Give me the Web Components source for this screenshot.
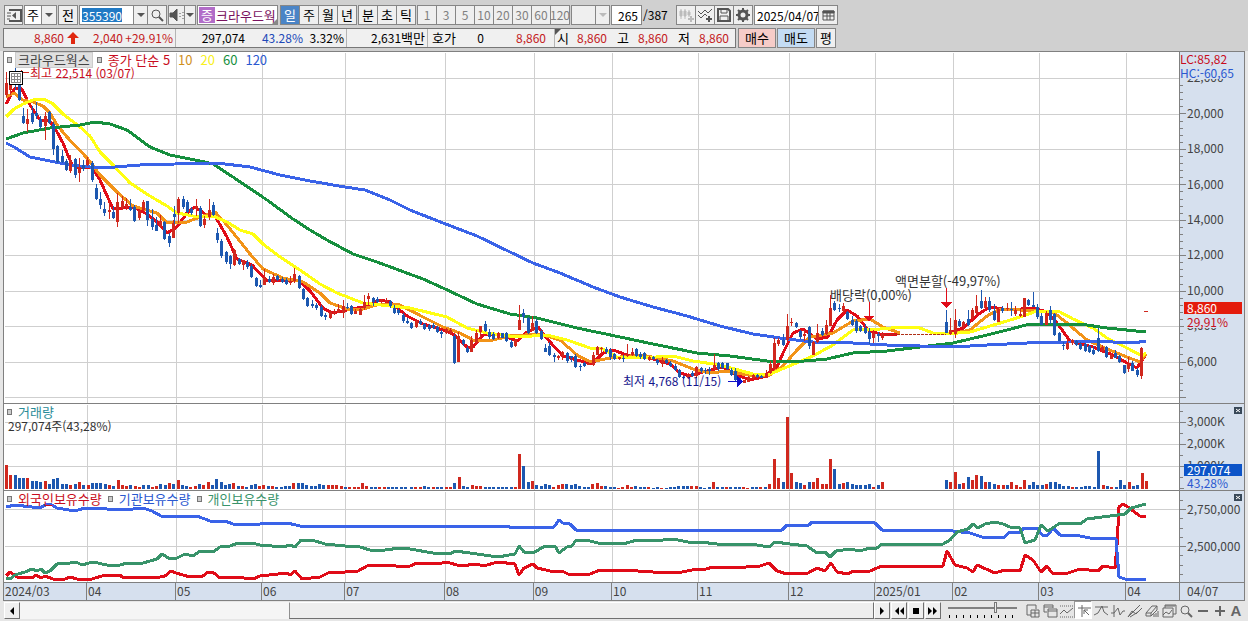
<!DOCTYPE html>
<html lang="ko">
<head>
<meta charset="utf-8">
<meta name="viewport" content="width=device-width, initial-scale=1">
<title>크라우드웍스 355390</title>
<style>
body {
    margin: 0;
    background: #e6e6e6;
    color: #000;
    font: 13px/14px "Noto Sans CJK KR", sans-serif;
}
</style>
</head>
<body>
<stock-app></stock-app>

<script>
// Every pane is drawn on one shared coordinate sheet; a pane shows its own window of it.
const SHEET = {
    price: { view: [4, 52, 1175, 351], grid: [78, 114, 149, 184, 220, 255, 291, 326, 362, 397] },
    volume: { view: [4, 404, 1175, 86], grid: [422, 444, 466] },
    holding: { view: [4, 491, 1175, 91], grid: [509, 546] }
};
const MONTH_LINES = [87, 176, 262, 345, 445, 534, 612, 698, 789, 875, 953, 1039, 1126];

// Runs of candles: first x, last x, then "colour high bodyTop bodyBottom low".
const CANDLES = [
    [6, 173, `r 72 83 95 97,r 78 82 90 95,b 68 75 84 90,b 72 78 100 101,b 108 116 123 124,r 109 119 124 132,b 106 113 122 124,b 102 113 116 119,b 116 119 127 129,r 112 116 126 140,b 111 112 123 124,b 122 124 149 155,b 145 146 162 163,b 150 156 162 163,b 159 161 170 171,r 155 161 171 173,b 158 159 175 178,r 158 167 173 182,b 160 165 169 171,r 157 160 165 166,b 161 163 180 182,b 184 188 199 200,b 192 199 205 209,b 202 209 213 216,r 201 210 212 219,b 206 212 218 219,r 193 202 222 227,r 196 201 208 210,r 198 204 207 210,b 199 207 210 211,b 205 207 221 222,r 209 210 218 220,r 200 202 210 211,b 201 201 220 226,b 209 219 227 230,b 217 225 231 231,r 215 221 227 228,b 221 222 239 240,b 233 236 243 247,r 220 223 238 238`],
    [174, 213, `b 206 214 217 224,r 197 199 213 223,b 196 199 207 209,b 200 202 212 213,b 207 209 213 215,r 199 206 209 216,b 206 208 226 227,r 216 219 225 228,r 199 210 217 220,b 202 205 215 216`],
    [217, 316, `b 228 233 240 243,b 239 241 256 258,b 251 252 262 264,b 255 256 264 269,r 249 250 265 266,b 258 259 264 265,r 260 260 265 270,b 260 262 267 269,b 264 266 277 278,b 277 278 286 287,b 280 285 287 288,r 269 278 285 285,b 276 279 282 283,r 274 277 283 285,b 275 276 280 281,b 277 279 282 283,b 278 280 284 285,r 276 281 283 285,r 268 274 281 283,b 275 276 288 289,b 288 289 299 300,b 297 298 306 307,b 300 304 306 308,b 303 305 308 310`],
    [321, 450, `b 305 307 316 317,b 313 315 317 320,r 310 312 318 319,r 309 312 313 315,r 304 309 312 313,r 300 306 313 318,b 303 307 308 309,b 305 306 314 315,r 309 311 314 314,r 307 309 315 315,r 295 302 308 310,r 293 296 299 305,b 297 298 302 306,b 297 299 302 303,r 299 300 301 303,r 298 300 302 303,b 300 301 306 308,b 305 308 313 314,b 308 310 313 315,b 313 315 321 323,b 318 321 323 324,b 322 323 328 329,r 319 321 327 328,b 319 321 324 325,b 323 324 329 330,b 324 325 329 331,b 323 325 328 329,b 326 327 332 333,b 330 332 334 338,r 328 329 333 334,r 328 330 334 335`],
    [454, 515, `b 334 336 363 364,r 332 336 362 362,b 339 340 344 346,b 346 348 352 353,r 336 340 352 352,r 330 333 343 343,r 326 326 332 338,b 321 324 331 332,b 329 332 337 339,b 332 334 339 340,r 332 333 338 339,b 333 333 338 338,b 332 333 341 342,b 340 342 347 348,r 339 340 346 347`],
    [519, 636, `r 305 320 330 330,b 309 313 317 323,b 317 318 333 334,r 316 323 331 331,b 319 321 333 334,b 329 331 339 340,b 344 348 352 352,b 342 346 355 356,b 353 355 357 362,r 355 356 358 360,r 351 352 356 360,b 352 353 361 363,b 356 356 358 362,b 354 356 367 368,b 364 366 367 371,b 362 363 366 367,r 362 363 365 365,r 352 355 365 366,r 346 347 355 355,r 347 348 349 354,b 347 349 352 354,b 348 350 357 360,b 353 354 359 360,r 357 357 359 360,b 355 358 359 362,r 344 354 356 357,r 348 352 355 356,b 348 349 356 357`],
    [640, 770, `b 352 354 357 359,b 352 353 359 360,r 356 357 360 361,b 356 357 359 360,b 359 360 363 365,r 357 360 364 367,b 359 360 363 364,b 361 363 366 367,b 364 366 370 371,b 369 370 377 378,b 376 377 378 379,r 373 375 378 379,b 371 373 376 377,r 366 367 376 378,b 367 368 371 373,b 368 370 371 374,b 367 369 371 375,r 354 365 369 370,b 362 363 369 371,b 362 363 368 369,b 363 363 369 370,b 368 370 375 376,b 368 371 380 381,b 378 380 383 384,r 380 380 383 383,r 376 377 382 382,r 374 375 378 379,b 374 375 377 378,b 375 376 378 378,r 370 373 378 378,r 361 364 373 374`],
    [774, 882, `r 338 343 369 370,r 338 340 344 346,b 334 340 345 346,r 314 326 340 341,r 318 322 323 326,b 322 323 327 328,b 330 331 337 339,r 330 334 336 341,b 326 327 346 349,r 341 342 355 355,r 324 333 342 343,b 328 331 335 336,r 320 325 334 335,r 295 308 326 326,b 301 303 310 311,b 304 308 309 312,r 303 306 311 313,b 311 312 319 320,b 316 320 325 326,b 319 321 331 333,b 325 326 331 332,b 324 328 333 334,b 328 332 339 344,r 330 333 338 343,b 332 334 336 342,r 332 334 338 340`],
    [946, 1141, `b 310 322 333 333,r 318 330 334 335,r 309 320 334 338,b 319 321 326 327,r 321 322 326 330,b 310 319 325 326,r 308 310 318 320,r 295 306 313 315,b 290 301 308 309,r 297 301 308 308,b 297 301 310 312,b 304 311 320 321,r 307 309 322 322,b 306 308 311 313,r 303 308 309 311,b 302 309 310 316,r 306 310 314 316,r 308 314 316 317,r 298 298 317 317,b 299 300 305 306,b 292 305 307 307,b 304 307 317 319,b 313 316 325 325,r 311 313 325 325,b 306 310 320 324,b 313 314 335 336,b 332 333 341 341,b 342 345 346 350,r 340 343 349 350,r 339 340 343 345,b 340 341 345 346,b 342 344 349 350,b 343 344 351 352,b 345 346 352 353,b 346 350 354 355,b 328 338 351 352,r 345 347 351 353,b 346 347 357 358,r 353 355 359 359,b 350 353 358 358,b 355 356 362 363,b 365 365 373 374,r 357 364 369 372,b 361 363 371 371,b 368 370 375 377,r 347 348 376 379`]
];

const AVERAGES = [
    ["#e00c18", "6,104 15,88 22,89 28,102 40,120 50,121 57,132 63,143 72,165 80,168 92,167 100,180 113,209 133,207 147,214 157,222 167,233 177,227 187,213 195,207 205,214 215,216 227,237 237,259 252,265 267,281 283,280 300,281 310,291 323,308 332,313 347,310 363,307 380,300 390,302 407,316 423,324 443,330 453,334 467,347 473,347 483,335 500,334 517,341 527,332 538,327 550,342 563,356 577,360 592,364 603,353 613,350 627,355 637,355 653,359 670,364 680,373 690,376 703,372 723,367 737,375 750,380 763,377 777,367 783,353 793,333 803,329 817,339 828,337 837,320 847,310 857,316 868,330 883,335 897,334"],
    ["#e00c18", "950,333 963,328 980,313 990,307 1010,310 1033,308 1047,312 1057,323 1070,341 1093,347 1113,355 1127,363 1137,368 1146,354"],
    ["#f29318", "6,97 14,93 23,100 33,102 43,106 50,113 57,125 67,137 87,158 100,175 117,192 133,206 157,213 167,223 187,222 200,217 215,212 227,225 250,254 263,269 283,278 303,282 320,293 330,303 347,309 363,309 380,304 400,305 423,317 443,327 460,333 473,340 493,340 510,336 540,334 560,340 577,355 590,362 610,358 640,355 647,356 673,361 693,369 710,373 727,371 753,376 770,375 783,366 797,350 810,337 833,333 853,321 870,319 883,327 900,333"],
    ["#f29318", "950,334 970,330 987,316 1000,309 1020,310 1053,312 1067,323 1087,340 1107,349 1127,357 1140,362 1146,354"],
    ["#ffff12", "6,117 14,109 23,104 33,100 43,99 52,103 63,114 80,127 90,136 100,152 115,167 130,183 150,196 167,206 177,213 193,216 213,216 227,222 240,230 253,234 263,244 280,257 300,270 320,284 337,293 363,303 390,306 410,308 447,317 467,328 487,333 517,337 547,335 567,340 590,348 603,349 617,357 640,358 673,356 693,361 720,365 753,374 770,374 787,367 813,356 833,345 853,330 880,329 903,327 917,327 933,333 947,334 970,332 997,324 1020,317 1037,311 1060,312 1073,319 1093,328 1107,338 1127,348 1142,356 1146,353"],
    ["#168f3e", "6,139 23,133 50,128 80,125 95,122 110,124 127,130 150,147 170,155 200,161 213,164 233,177 267,200 293,219 310,230 327,240 353,254 377,262 423,279 443,288 477,304 510,314 537,318 577,328 620,337 653,344 697,353 730,356 767,361 793,362 827,359 853,353 887,351 920,347 953,343 987,335 1007,330 1030,324 1053,324 1080,324 1107,328 1146,332"],
    ["#3a63e8", "6,143 14,147 30,157 50,161 70,165 90,167 115,167 140,165 175,164 210,163 225,164 250,167 280,175 310,181 345,187 365,190 390,200 410,210 443,223 477,236 510,252 533,263 560,273 593,287 620,297 653,307 687,316 720,326 753,334 787,339 813,342 853,343 887,345 920,346 953,347 987,345 1027,343 1070,342 1093,341 1133,343 1146,341"]
];

// Runs of volume bars: first x, last x, then colour and height of each bar.
const VOLUMES = [
    [6, 405, "r24 r14 b14 b11 b11 r11 b8 b8 b7 r8 b5 b10 b11 b5 b5 r4 b5 r7 b4 r4 b6 b6 b6 b5 r4 b3 r9 r4 r3 b4 r3 r2 b4 b4 r2 r3 b5 b4 r6 b5 r9 b4 b3 r2 r3 b5 r4 r7 b4 b10 b7 b4 b5 r6 b3 r3 b2 b4 b5 r3 r4 b3 r3 b2 b2 b3 b3 r6 b6 b6 b4 b3 b3 b5 b4 r4 r4 r4 r3 b2 r2 r2 r2 r6 r3 b2 b2 r2 r2 b2 b2 b2 b2 b2"],
    [411, 515, "b2 r2 r2 b3 b2 r2 b2 b2 r2 r2 b6 r12 b3 b2 r4 r3 r3 b2 b2 b2 b2 b2 b2 b2 r2"],
    [519, 769, "r35 b23 b7 r8 b4 b3 b5 b4 r2 r4 r5 b5 b4 b5 b3 b2 b2 r5 r6 r3 b3 b2 b2 r1 r2 r4 r2 b3 b2 b2 r2 b1 b2 r1 b1 b2 b2 b3 b3 b3 r3 r3 b2 b1 b2 r7 b2 b2 r2 b2 b2 b2 r2 r1 b2 b2 r2 b2 r5"],
    [774, 882, "r30 r11 b7 r72 r16 b7 b6 r4 b7 r7 r11 r5 r5 r30 b20 b5 r6 b7 b5 b4 b4 b4 b5 r2 b4 r7"],
    [946, 1146, "b9 r7 r17 b5 r6 b12 r9 r14 b13 r7 b7 b5 r4 r4 b4 r7 r4 r2 r9 b4 b7 b4 b4 r5 b7 b7 b5 b3 b3 r2 b2 b2 b3 b3 b2 b38 r4 b3 r2 b2 b9 b4 r7 b3 b4 r16 r8"]
];

const HOLDINGS = [
    ["#e00c18", "6,576 10,572 17,577 32,578 36,575 41,578 45,576 53,579 65,579 70,577 77,579 92,579 105,575 120,575 122,577 145,577 155,578 165,576 171,571 176,573 190,577 203,576 208,572 214,573 220,578 235,577 253,579 260,576 287,573 290,575 295,571 302,579 320,577 328,573 345,572 358,571 367,566 390,565 402,567 410,566 417,563 442,563 447,562 460,566 477,564 483,566 498,562 515,564 519,575 524,568 533,564 537,568 550,571 562,571 568,574 590,574 600,570 623,570 653,572 677,573 697,569 703,570 713,567 733,568 760,566 769,563 777,571 787,574 808,573 817,568 825,571 831,563 837,572 848,574 853,571 870,571 882,566 943,566 947,551 955,565 967,568 973,572 977,565 995,573 1005,570 1020,571 1025,555 1033,560 1041,572 1047,566 1052,573 1068,573 1080,569 1098,571 1103,566 1115,568 1117,545 1119,507 1123,504 1128,507 1140,516 1146,516"],
    ["#3a63e8", "6,507 15,505 40,508 47,504 52,505 57,508 75,511 85,508 100,508 107,509 133,509 143,508 152,511 161,516 197,516 210,521 225,521 233,524 260,524 264,523 287,523 300,526 508,526 509,527 554,527 559,520 563,523 570,524 576,530 782,530 787,525 809,525 812,522 862,522 875,523 882,530 940,530 953,531 970,533 982,537 1003,538 1010,532 1020,532 1024,528 1037,528 1042,535 1048,535 1053,528 1060,535 1080,536 1090,538 1116,539 1119,577 1125,579 1146,579"],
    ["#38936a", "6,578 10,579 15,575 25,572 32,569 37,571 41,569 45,573 50,571 57,564 70,563 76,562 82,565 93,562 107,565 120,565 127,563 143,563 157,559 162,554 170,559 177,558 185,554 193,556 200,551 213,552 220,547 230,546 238,543 252,543 260,545 283,547 290,545 295,547 301,540 312,540 325,544 345,546 360,547 370,550 385,550 400,548 410,549 433,553 450,554 455,551 477,554 498,557 515,554 519,546 524,552 533,553 545,546 555,546 559,553 567,547 572,546 576,540 590,541 598,543 623,544 637,540 653,541 673,539 693,543 700,542 717,544 733,544 757,545 769,547 775,542 790,544 807,546 817,553 825,552 830,557 836,551 850,549 860,551 870,548 877,548 882,544 943,544 950,540 957,532 968,529 973,524 978,528 985,524 995,522 1003,524 1010,527 1020,528 1025,543 1035,540 1041,525 1048,531 1060,523 1080,524 1087,519 1110,516 1125,514 1131,508 1146,504"]
];

const RED = "#d0281e";
const BLUE = "#1d58b0";
const paint = c => c === "r" ? RED : BLUE;

const ICONS = {
    panel: `<path d="M3 3h12v11H3" stroke-width="2"/><path d="M10 5v7L6 8.500z" fill="currentColor" stroke="none"/><path d="M1 6h4M1 9h4M1 12h3"/>`,
    search: `<circle cx="7" cy="7" r="4"/><path d="M10 10l4 4" stroke-width="2"/>`,
    speaker: `<path d="M1 6h3l4-4v12l-4-4H1z" fill="currentColor"/><path d="M11 6v1M11 9v1M14 5v1M14 8v1M14 11v1"/>`,
    down: `<path d="M4 6h8l-4 4z" fill="currentColor" stroke="none"/>`,
    candles: `<path d="M3 2v10M7 2v10M11 3v7"/><path d="M2 4h2v5H2zM6 4h2v5H6zM10 5h2v3h-2z" fill="currentColor"/><path d="M13 9v6M10 12h6" stroke-width="2"/>`,
    addline: `<path d="M1 4l3 3 4-4 3 3 4-4M1 8l3 3 4-4 2 2"/><path d="M12 9v6M9 12h6" stroke-width="2"/>`,
    save: `<path d="M2 2h10l2 2v10H2z" stroke-width="2"/><path d="M5 2v4h6V2M4 14V9h8v5"/>`,
    gear: `<circle cx="8" cy="8" r="4" stroke-width="3"/><path d="M8 1v3M8 12v3M1 8h3M12 8h3M3 3l2 2M11 11l2 2M13 3l-2 2M5 11l-2 2" stroke-width="2"/>`,
    calendar: `<path d="M3 4h11v9H3zM3 9h11M7 6v7M10 6v7"/><path d="M3 4h11v2H3z" fill="currentColor"/>`,
    left: `<path d="M10 4v8L6 8z" fill="currentColor" stroke="none"/>`,
    right: `<path d="M6 4v8l4-4z" fill="currentColor" stroke="none"/>`,
    rewind: `<path d="M8 4v8L4 8zM13 4v8L9 8z" fill="currentColor" stroke="none"/>`,
    forward: `<path d="M3 4v8l4-4zM8 4v8l4-4z" fill="currentColor" stroke="none"/>`,
    stop: `<path d="M5 5h6v6H5z" fill="currentColor" stroke="none"/>`,
    newpane: `<path d="M6 12H2V2h9v4"/><path d="M6 7h8v7H6zM6 10h8M10 7v7"/>`,
    windows: `<path d="M5 9H2V2h9v3M2 4h9M6 6h9v8H6zM6 8h9"/>`,
    dots: `<path d="M1 3h14M1 14h14" stroke-dasharray="1 1"/><path d="M1 11l4-4 3 3 6-5"/>`,
    cross: `<path d="M6 2v12M2 5h13"/><path d="M13 12L8 7M8 11V7h4"/>`,
    peak: `<path d="M2 4h13M1 12l4-2 4-7 2 6 4 3"/>`,
    spike: `<path d="M4 2v12M1 10h3l4-5 2 7 3-4h2"/>`,
    slopes: `<path d="M1 14L13 2M1 14l4-6 4 3 6-6M3 14l8-5"/>`,
    eraser: `<path d="M2 10l6-7h5l-6 7zM2 10v3h5v-3M7 13l6-6V3"/><path d="M10 14v-3M12 14v-4M14 14v-6"/>`,
    images: `<path d="M4 5V2h11v9h-3M2 5h10v9H2zM2 12l3-3 3 2 3-4M4 3h10"/>`,
    minus: `<path d="M3 8h10" stroke-width="2"/>`,
    plus: `<path d="M3 8h10M8 3v10" stroke-width="2"/>`
};

class ToolIcon extends HTMLElement {
    constructor() {
        super();
        this.attachShadow({ mode: "open" });
    }
    connectedCallback() {
        this.shadowRoot.innerHTML = `
            <style>
            :host { display: inline-block; width: 16px; height: 16px; flex: none; }
            svg { display: block; width: 16px; height: 16px; }
            </style>
            <svg viewBox="0 0 16 16" fill="none" stroke="currentColor" aria-hidden="true">${ICONS[this.getAttribute("name")] || ""}</svg>
        `;
    }
}
customElements.define("tool-icon", ToolIcon);

class ToolButton extends HTMLElement {
    constructor() {
        super();
        this.attachShadow({ mode: "open" });
        this.shadowRoot.innerHTML = `
            <style>
            :host { display: flex; width: var(--w, 20px); height: 20px; flex: none; margin-right: -1px; }
            button {
                box-sizing: border-box;
                display: flex;
                align-items: center;
                justify-content: center;
                width: 100%;
                margin: 0;
                padding: 0;
                overflow: hidden;
                border: 1px solid #868686;
                background: var(--bg, #efefef);
                color: inherit;
                font: inherit;
            }
            :host([flat]) { margin: 0; height: 17px; }
            :host([flat]) button { border: 0; background: none; }
            :host([raised]) { margin: 0; height: 17px; }
            :host([raised]) button { border-color: #fff #707070 #707070 #fff; }
            :host([active]) button { background: #4a84c6; color: #fff; }
            :host([dim]) button { color: #808080; font-size: 12px; }
            </style>
            <button type="button"><slot></slot></button>
        `;
    }
    connectedCallback() {
        const label = this.getAttribute("label");
        if (label) this.shadowRoot.querySelector("button").setAttribute("aria-label", label);
    }
}
customElements.define("tool-button", ToolButton);

class StockToolbar extends HTMLElement {
    constructor() {
        super();
        this.attachShadow({ mode: "open" });
        const group = (names, attrs = "") => names.map(n => `<tool-button ${attrs}>${n}</tool-button>`).join("");
        this.shadowRoot.innerHTML = `
            <style>
            :host { display: flex; align-items: center; gap: 1px; height: 20px; padding-left: 4px; white-space: nowrap; overflow: hidden; }
            .group { display: flex; flex: none; padding-right: 1px; }
            input, select {
                box-sizing: border-box;
                height: 20px;
                margin: 0;
                padding: 0 3px;
                border: 1px solid #868686;
                border-radius: 0;
                background-color: #fff;
                color: inherit;
                font: inherit;
            }
            select { appearance: none; }
            .kind { width: 18px; margin-right: -1px; padding: 0 2px; }
            .code { width: 55px; margin-right: -1px; padding-left: 2px; font-size: 12px; color: #fff; background: linear-gradient(#2079c4, #2079c4) 2px 2px / 40px 14px no-repeat #fff; }
            .name { display: flex; align-items: center; width: 81px; height: 20px; box-sizing: border-box; border: 1px solid #868686; background: #fff; overflow: hidden; position: relative; margin-right: 1px; }
            .name b { width: 16px; margin: 0 1px; flex: none; text-align: center; line-height: 16px; color: #fff; background: #b26cc8; font-weight: normal; }
            .name input { flex: 1; min-width: 0; height: 18px; border: 0; padding: 0; color: #7a1260; }
            .name::after { content: ""; position: absolute; right: 0; bottom: 0; width: 5px; height: 5px; background: #888; clip-path: polygon(100% 0, 100% 100%, 0 100%); }
            .blank { width: 25px; margin-right: -1px; background: #efefef; }
            .count { width: 31px; padding: 0 3px; text-align: right; font-size: 12px; }
            .total { width: 32px; font-size: 12px; }
            .date { width: 65px; margin-right: -1px; padding: 0 0 0 2px; font-size: 12px; }
            .ghost { color: #bbb; }
            .dark { color: #555; }
            </style>
            <span class="group"><tool-button label="패널" style="--w:19px"><tool-icon class="dark" name="panel"></tool-icon></tool-button></span>
            <span class="group">
                <select class="kind" aria-label="종류"><option>주</option></select>
                <tool-button label="종류 열기" style="--w:16px"><tool-icon class="dark" name="down"></tool-icon></tool-button>
            </span>
            <span class="group"><tool-button>전</tool-button></span>
            <span class="group">
                <input class="code" aria-label="종목코드" value="355390">
                <tool-button label="종목 목록" style="--w:15px"><tool-icon class="dark" name="down"></tool-icon></tool-button>
                <tool-button label="검색"><tool-icon class="dark" name="search"></tool-icon></tool-button>
            </span>
            <span class="group">
                <tool-button label="음성" style="--w:17px"><tool-icon class="dark" name="speaker"></tool-icon></tool-button>
                <tool-button label="음성 메뉴" style="--w:12px"><tool-icon class="dark" name="down"></tool-icon></tool-button>
            </span>
            <span class="name"><b>증</b><input aria-label="종목명" value="크라우드웍" readonly></span>
            <span class="group"><tool-button active>일</tool-button>${group(["주", "월", "년"])}</span>
            <span class="group">${group(["분", "초", "틱"])}</span>
            <span class="group">${group(["1", "3", "5", "10", "20", "30", "60", "120"], "dim")}</span>
            <span class="group">
                <input class="blank" aria-label="사용자 주기">
                <tool-button label="주기 열기" style="--w:15px"><tool-icon class="ghost" name="down"></tool-icon></tool-button>
            </span>
            <input class="count" aria-label="표시 개수" value="265"><span class="total">/387</span>
            <span class="group">
                <tool-button label="봉 추가"><tool-icon class="ghost" name="candles"></tool-icon></tool-button>
                <tool-button label="지표 추가"><tool-icon class="dark" name="addline"></tool-icon></tool-button>
                <tool-button label="저장"><tool-icon class="dark" name="save"></tool-icon></tool-button>
                <tool-button label="설정"><tool-icon class="dark" name="gear"></tool-icon></tool-button>
            </span>
            <span class="group">
                <input class="date" aria-label="날짜" value="2025/04/07">
                <tool-button label="달력"><tool-icon class="dark" name="calendar"></tool-icon></tool-button>
            </span>
        `;
    }
}
customElements.define("stock-toolbar", StockToolbar);

class QuoteBar extends HTMLElement {
    constructor() {
        super();
        this.attachShadow({ mode: "open" });
        this.shadowRoot.innerHTML = `
            <style>
            :host { display: flex; gap: 2px; height: 20px; padding-left: 3px; white-space: nowrap; overflow: hidden; }
            .cells { display: flex; flex: none; box-sizing: border-box; border: 1px solid #777; background: #f0f0f0; font-size: 12px; line-height: 18px; }
            .cells > div { display: grid; box-sizing: border-box; border-right: 1px solid #b4b4b4; padding: 0 2px; text-align: right; }
            .cells > div:last-child { border: 0; }
            .price { grid-template-columns: 58px 16px 43px 50px; }
            .volume { grid-template-columns: 67px 58px 41px; }
            .amount { grid-template-columns: 76px; }
            .ask { grid-template-columns: 26px 28px 62px; width: 127px; }
            .ohl { grid-template-columns: 11px 39px 22px 39px 22px 39px; width: 180px; position: relative; }
            .ohl::before { content: ""; position: absolute; left: 0; top: 0; border: 3px solid; border-color: #555 transparent transparent #555; }
            b { font-size: 13px; font-weight: normal; }
            .up { color: #c4201c; }
            .down { color: #2048b8; }
            svg { width: 14px; height: 12px; align-self: center; margin-left: 2px; }
            </style>
            <div class="cells">
                <div class="price up"><span>8,860</span><svg viewBox="0 0 14 12" aria-hidden="true"><path d="M7 0l6 6H9v6H5V6H1z" fill="#e02810"/></svg><span>2,040</span><span>+29.91%</span></div>
                <div class="volume"><span>297,074</span><span class="down">43.28%</span><span>3.32%</span></div>
                <div class="amount"><span>2,631<b>백만</b></span></div>
                <div class="ask"><b>호가</b><span>0</span><span class="up">8,860</span></div>
                <div class="ohl"><b>시</b><span class="up">8,860</span><b>고</b><span class="up">8,860</span><b>저</b><span class="up">8,860</span></div>
            </div>
            <tool-button style="--w:38px;--bg:#f6ccc8">매수</tool-button>
            <tool-button style="--w:38px;--bg:#c4dcf4">매도</tool-button>
            <tool-button>평</tool-button>
        `;
    }
}
customElements.define("quote-bar", QuoteBar);

class ChartPlot extends HTMLElement {
    constructor() {
        super();
        this.attachShadow({ mode: "open" });
    }
    connectedCallback() {
        const kind = this.getAttribute("kind");
        const [x, y, w, h] = SHEET[kind].view;
        const grid = SHEET[kind].grid.map(g => `M${x} ${g}h${w}`).join("") + MONTH_LINES.map(m => `M${m} ${y}v${h}`).join("");
        const body = { price: this._price, volume: this._volume, holding: this._holding }[kind].call(this);
        this.shadowRoot.innerHTML = `
            <style>
            :host { display: block; position: relative; min-width: 0; min-height: 0; background: #fff; overflow: hidden; }
            .art { position: absolute; inset: 0; width: 100%; height: 100%; }
            .grid { stroke: #cfcfcf; vector-effect: non-scaling-stroke; }
            polyline { fill: none; stroke-width: 3; stroke-linejoin: round; vector-effect: non-scaling-stroke; }
            </style>
            <svg class="art" viewBox="${x} ${y} ${w} ${h}" preserveAspectRatio="none" shape-rendering="crispEdges" aria-hidden="true">
                <path class="grid" transform="translate(.5 .5)" d="${grid}"/>
                ${body}
            </svg>
            <slot></slot>
        `;
    }
    _spread(from, to, items, draw) {
        const step = items.length > 1 ? (to - from) / (items.length - 1) : 0;
        return items.map((item, i) => draw(Math.round(from + i * step), item)).join("");
    }
    _lines(series) {
        return series.map(([color, points]) => `<polyline stroke="${color}" points="${points}"/>`).join("");
    }
    _price() {
        const candles = CANDLES.map(([from, to, text]) => this._spread(from, to, text.split(","), (cx, item) => {
            const [c, high, top, bottom, low] = item.split(" ");
            return `<path fill="${paint(c)}" d="M${cx} ${high}h1V${low}h-1zM${cx - 1} ${top}h3V${Math.max(bottom, +top + 1)}h-3z"/>`;
        })).join("");
        return `
            ${this._lines(AVERAGES)}
            ${candles}
            <path d="M885 334.500h61" stroke="#b03018" stroke-dasharray="3 1"/>
            <path d="M1144 311.500h4" stroke="${RED}"/>
            <path d="M18 72.500h11M22 70l-3 3 3 3" stroke="${RED}" fill="none"/>
            <path d="M728 381.500h9" stroke="#1010c8"/><path d="M737 376l6 5-6 6z" fill="#1010c8"/>
            <path d="M869 302h1v14h4l-5 6-5-6h5zM946 288h1v14h5l-6 6-6-6h6z" fill="#e00c18"/>
        `;
    }
    _volume() {
        return VOLUMES.map(([from, to, text]) => this._spread(from, to, text.split(" "), (cx, item) =>
            `<rect x="${cx - 1}" y="${489 - item.slice(1)}" width="3" height="${item.slice(1)}" fill="${paint(item[0])}"/>`)).join("");
    }
    _holding() {
        return this._lines(HOLDINGS);
    }
}
customElements.define("chart-plot", ChartPlot);

// Text pinned to a point of a plot; x and y are sheet coordinates.
class ChartNote extends HTMLElement {
    constructor() {
        super();
        this.attachShadow({ mode: "open" });
        this.shadowRoot.innerHTML = `
            <style>:host { position: absolute; white-space: nowrap; transform: translateY(-50%); }</style>
            <slot></slot>
        `;
    }
    connectedCallback() {
        const [x, y, w, h] = SHEET[this.parentElement.getAttribute("kind")].view;
        this.style.left = (this.getAttribute("x") - x) / w * 100 + "%";
        this.style.top = (this.getAttribute("y") - y) / h * 100 + "%";
    }
}
customElements.define("chart-note", ChartNote);

class ChartLegend extends HTMLElement {
    constructor() {
        super();
        this.attachShadow({ mode: "open" });
        this.shadowRoot.innerHTML = `
            <style>
            :host { position: relative; display: flex; align-items: center; gap: 6px; padding: 1px 3px 0; line-height: 14px; white-space: nowrap; }
            ::slotted(i) { box-sizing: border-box; width: 5px; height: 6px; border: 1px solid #777; background: #ccc; }
            </style>
            <slot></slot>
        `;
    }
}
customElements.define("chart-legend", ChartLegend);

class ValueAxis extends HTMLElement {
    constructor() {
        super();
        this.attachShadow({ mode: "open" });
    }
    connectedCallback() {
        const kind = this.getAttribute("kind");
        const [, y, , h] = SHEET[kind].view;
        const grid = SHEET[kind].grid;
        const minor = Number(this.getAttribute("minor"));
        const unit = (grid[grid.length - 1] - grid[0]) / (grid.length - 1) / minor;
        let ticks = "";
        for (let i = -minor; grid[0] + i * unit < y + h - 1; i++) {
            const ty = Math.round(grid[0] + i * unit);
            if (ty > y) ticks += `M0 ${ty}h${i % minor ? 3 : 6}`;
        }
        // Row 1 of the grid is the space above the first label.
        const labels = this.getAttribute("labels").split(" ").map((t, i) => `<span style="grid-row:${i + 2}">${t}</span>`).join("");
        this.shadowRoot.innerHTML = `
            <style>
            :host { display: grid; grid-template-rows: var(--rows); align-items: center; position: relative; box-sizing: border-box; border-left: 1px solid #808080; background: #d6e0ee; color: #444; font-size: 12px; overflow: hidden; min-height: 0; }
            svg { position: absolute; left: 0; top: 0; width: 6px; height: 100%; }
            span { padding-left: 7px; line-height: 12px; height: 14px; }
            ::slotted(*) { position: absolute; left: 4px; width: 58px; box-sizing: border-box; padding-left: 3px; line-height: 12px; transform: translateY(-50%); }
            button { position: absolute; right: 2px; top: 3px; width: 8px; height: 7px; padding: 0; border: 0; background: #384858; }
            button svg { position: static; display: block; width: 8px; height: 7px; }
            </style>
            <svg viewBox="0 ${y} 6 ${h}" preserveAspectRatio="none" shape-rendering="crispEdges" aria-hidden="true"><path transform="translate(0 .5)" d="${ticks}" stroke="#808080"/></svg>
            ${labels}
            <slot></slot>
            ${kind === "price" ? "" : `<button type="button" aria-label="닫기"><svg viewBox="0 0 8 7"><path d="M2 2l4 3M6 2L2 5" stroke="#fff"/></svg></button>`}
        `;
    }
}
customElements.define("value-axis", ValueAxis);

class TimeAxis extends HTMLElement {
    constructor() {
        super();
        this.attachShadow({ mode: "open" });
        const months = ["2024/03", "04", "05", "06", "07", "08", "09", "10", "11", "12", "2025/01", "02", "03", "04"];
        const edges = [4, ...MONTH_LINES, 1179];
        this.shadowRoot.innerHTML = `
            <style>
            :host { display: flex; height: 17px; border-top: 1px solid #808080; background: #d6e0ee; color: #444; font-size: 12px; line-height: 16px; }
            .months { display: flex; flex: 1; min-width: 0; }
            .months span { box-sizing: border-box; min-width: 0; flex-basis: 0; padding-left: 1px; border-left: 1px solid #808080; }
            .months span:first-child { border: 0; }
            .last { box-sizing: border-box; width: 65px; padding-left: 7px; border-left: 1px solid #808080; }
            </style>
            <div class="months">${months.map((m, i) => `<span style="flex-grow:${edges[i + 1] - edges[i]}">${m}</span>`).join("")}</div>
            <span class="last">04/07</span>
        `;
    }
}
customElements.define("time-axis", TimeAxis);

class PlaybackBar extends HTMLElement {
    constructor() {
        super();
        this.attachShadow({ mode: "open" });
        const tools = ["newpane", "windows", "dots", "cross", "peak", "spike", "slopes", "eraser", "images", "search", "minus", "plus"];
        const labels = ["창 추가", "창 배열", "추세", "십자선", "고점", "변곡", "추세선", "지우개", "그림", "확대경", "축소", "확대"];
        this.shadowRoot.innerHTML = `
            <style>
            :host { display: flex; align-items: center; height: 17px; padding: 0 4px; color: #000; }
            .track { display: flex; flex: 1; height: 17px; background: #f5f5f5; }
            .track::before { content: ""; flex: 271; }
            .thumb { flex: 586; box-sizing: border-box; border: 1px solid; border-color: #fff #707070 #707070 #909090; background: #eeeeee; }
            .play { display: flex; gap: 1px; }
            .slide { width: 69px; height: 17px; margin: 0 7px; }
            input { appearance: none; display: block; width: 69px; height: 11px; margin: 0; background: linear-gradient(#808080, #808080) 0 5px / 100% 2px no-repeat; }
            input::-webkit-slider-thumb { appearance: none; width: 3px; height: 11px; background: #eee; border: 1px solid #777; box-sizing: border-box; }
            .slide::after { content: ""; display: block; height: 3px; margin: 2px 1px; background: repeating-linear-gradient(90deg, #000 0 1px, transparent 1px 7px); }
            .tools { display: flex; color: #666; }
            .on { background: #fff; box-shadow: -1px -1px #999; }
            strong { font-family: "Liberation Sans", sans-serif; font-size: 15px; }
            </style>
            <tool-button raised label="이전" style="--w:16px"><tool-icon name="left"></tool-icon></tool-button>
            <div class="track"><div class="thumb"></div></div>
            <div class="play">
                <tool-button raised label="재생" style="--w:16px"><tool-icon name="right"></tool-icon></tool-button>
                <tool-button raised label="뒤로" style="--w:16px"><tool-icon name="rewind"></tool-icon></tool-button>
                <tool-button raised label="정지" style="--w:16px"><tool-icon name="stop"></tool-icon></tool-button>
                <tool-button raised label="앞으로" style="--w:16px"><tool-icon name="forward"></tool-icon></tool-button>
            </div>
            <div class="slide"><input type="range" aria-label="속도" min="0" max="100" value="70"></div>
            <div class="tools">
                ${tools.map((t, i) => `<tool-button flat label="${labels[i]}" ${t === "cross" ? "class=on" : ""} style="--w:17px"><tool-icon name="${t}"></tool-icon></tool-button>`).join("")}
                <tool-button flat style="--w:16px"><strong>A</strong></tool-button>
            </div>
        `;
    }
}
customElements.define("playback-bar", PlaybackBar);

class StockApp extends HTMLElement {
    constructor() {
        super();
        this.attachShadow({ mode: "open" });
        const t = document.createElement("template");
        t.innerHTML = `
            <style>
            :host { display: flex; flex-direction: column; min-height: 100vh; }
            header { display: flex; flex-direction: column; gap: 3px; padding: 5px 0 3px; background: #d0d0d0; }
            main { display: flex; flex-direction: column; flex: 1; margin: 0 3px; border: 1px solid #808080; }
            .row { display: grid; grid-template-columns: minmax(0, 1fr) 65px; }
            .row + .row { border-top: 1px solid #808080; }
            .price { flex: 1; min-height: 240px; --rows: 17fr repeat(9, 71fr) 47fr; }
            .volume { height: 86px; --rows: 7fr repeat(3, 22fr) 13fr; }
            .holding { height: 91px; --rows: 0 37fr 37fr 17fr; }
            footer { padding: 1px 0 2px; }
            .title { padding: 0 2px; background: #e0e0e0; color: #444; border: 0; font: inherit; height: 14px; margin: 0 -1px 0 -2px; box-shadow: 0 0 0 1px #ccc; }
            .red { color: #c80c20; }
            .orange { color: #d0901c; }
            .yellow { color: #f8f020; }
            .green { color: #168f3e; }
            .sea { color: #38936a; }
            .blue { color: #2a58d0; }
            .teal { color: #2a8c98; }
            .navy { color: #14148c; }
            .ink { color: #333; }
            .ma { display: flex; gap: 8px; }
            .small { font-size: 12px; }
            .sub { position: relative; padding-left: 4px; color: #333; font-size: 12px; line-height: 13px; }
            .tag { background: #e41c0c; color: #fff; }
            .vol { background: #0c54c8; color: #fff; }
            .patch { background: #d6e0ee; }
            .edge { margin-left: -4px; padding-left: 0; }
            .grip { position: absolute; left: 5px; top: 19px; box-sizing: border-box; width: 14px; height: 14px; padding: 1px; border: 1px solid #000; background: #fff; }
            .grip svg { display: block; }
            </style>
            <header>
                <stock-toolbar></stock-toolbar>
                <quote-bar></quote-bar>
            </header>
            <main>
                <div class="row price">
                    <chart-plot kind="price">
                        <chart-legend>
                            <i></i><button class="title" type="button">크라우드웍스</button>
                            <i></i><span class="ma"><span class="red">종가 단순 5</span><span class="orange">10</span><span class="yellow">20</span><span class="green">60</span><span class="blue">120</span></span>
                        </chart-legend>
                        <chart-note x="30" y="73" class="red small">최고 22,514 (03/07)</chart-note>
                        <chart-note x="623" y="381" class="navy small">최저 4,768 (11/15)</chart-note>
                        <chart-note x="830" y="295" class="ink">배당락(0,00%)</chart-note>
                        <chart-note x="895" y="281" class="ink">액면분할(-49,97%)</chart-note>
                        <button class="grip" type="button" aria-label="데이터 표">
                            <svg width="10" height="10" viewBox="0 0 10 10" fill="none" stroke="#888"><path d="M0 .5h10M0 3.500h10M0 6.500h10M0 9.500h10M.5 0v10M3.500 0v10M6.500 0v10M9.500 0v10"/></svg>
                        </button>
                    </chart-plot>
                    <value-axis kind="price" minor="5" labels="22,000 20,000 18,000 16,000 14,000 12,000 10,000 8,000 6,000">
                        <span class="patch edge red" style="top:2%">LC:85,82</span>
                        <span class="patch edge blue" style="top:6%">HC:-60,65</span>
                        <span class="patch red" style="top:77%">29,91%</span>
                        <span class="tag" style="top:73%">8,860</span>
                    </value-axis>
                </div>
                <div class="row volume">
                    <chart-plot kind="volume">
                        <chart-legend><i></i><span class="teal">거래량</span></chart-legend>
                        <div class="sub">297,074주(43,28%)</div>
                    </chart-plot>
                    <value-axis kind="volume" minor="2" labels="3,000K 2,000K 1,000K">
                        <span class="patch blue" style="top:92%">43,28%</span>
                        <span class="vol" style="top:77%">297,074</span>
                    </value-axis>
                </div>
                <div class="row holding">
                    <chart-plot kind="holding">
                        <chart-legend><i></i><span class="red">외국인보유수량</span><i></i><span class="blue">기관보유수량</span><i></i><span class="sea">개인보유수량</span></chart-legend>
                    </chart-plot>
                    <value-axis kind="holding" minor="4" labels="2,750,000 2,500,000"></value-axis>
                </div>
                <time-axis></time-axis>
            </main>
            <footer><playback-bar></playback-bar></footer>
        `;
        this.shadowRoot.append(t.content.cloneNode(true));
    }
}
customElements.define("stock-app", StockApp);
</script>
</body>
</html>
